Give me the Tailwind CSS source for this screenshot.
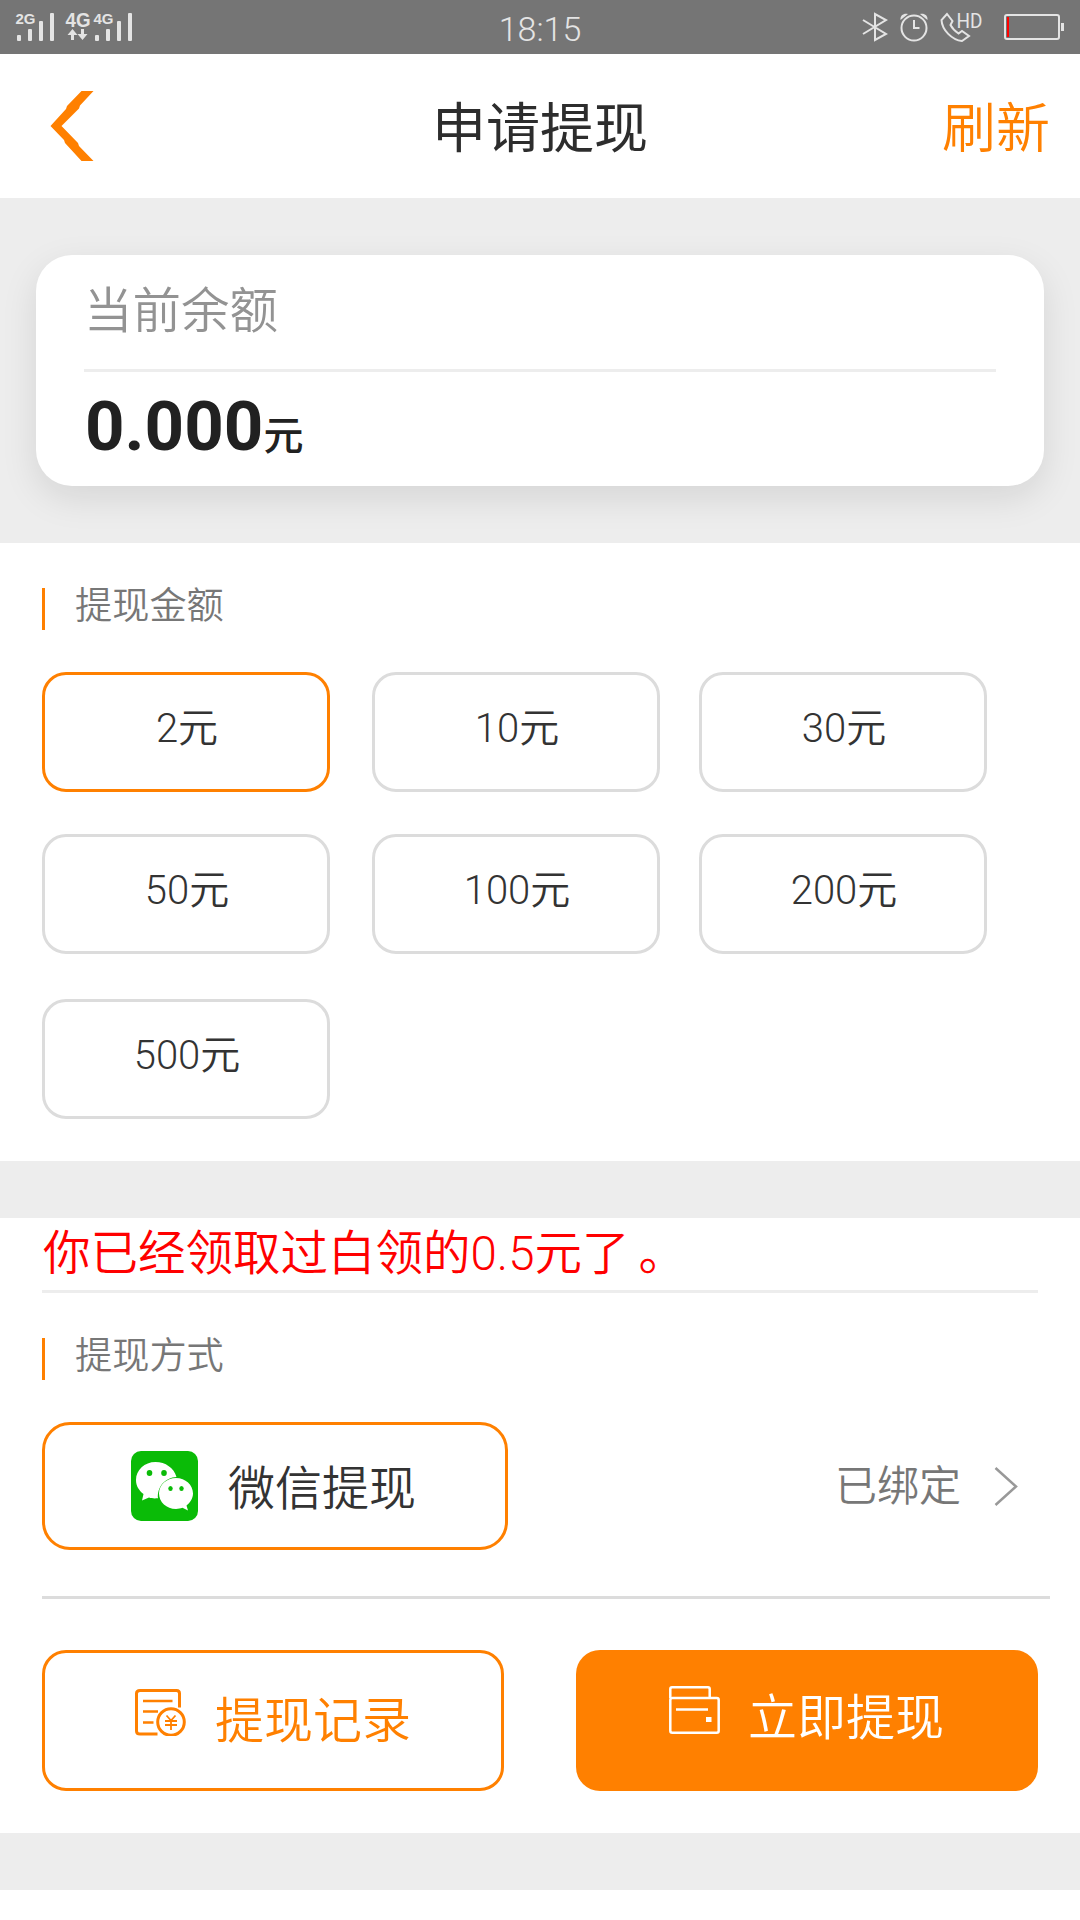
<!DOCTYPE html>
<html lang="zh-CN">
<head>
    <meta charset="UTF-8">
    <meta name="viewport" content="width=device-width, initial-scale=1.0">
    <script src="https://cdn.jsdelivr.net/npm/@tailwindcss/browser@4"></script>
    <title>申请提现</title>
</head>
<body class="bg-white">
    <div class="w-[1080px] h-[1920px] overflow-hidden bg-white font-['Roboto','Noto_Sans_CJK_SC',sans-serif] font-[350]">

        <!-- Status bar -->
        <div class="h-[54px] bg-[#757575] text-[#e4e4e4] flex items-center justify-between">
            <svg class="w-[150px] h-[54px]" viewBox="0 0 150 54" fill="#e4e4e4">
                <text x="15.500" y="24" font-family="Liberation Sans" font-weight="bold" font-size="15.500" textLength="20" lengthAdjust="spacingAndGlyphs">2G</text>
                <rect x="17" y="35" width="4" height="6" rx="1"/>
                <rect x="28" y="29" width="4" height="12" rx="1"/>
                <rect x="39" y="21" width="4" height="20" rx="1"/>
                <rect x="50" y="13" width="4" height="28" rx="1"/>
                <text x="65.500" y="27" font-family="Liberation Sans" font-weight="bold" font-size="19.500" textLength="25" lengthAdjust="spacingAndGlyphs">4G</text>
                <text x="93.500" y="24" font-family="Liberation Sans" font-weight="bold" font-size="15.500" textLength="20" lengthAdjust="spacingAndGlyphs">4G</text>
                <path d="M72.500 29 77.500 35H74V40H71V35H67.500Z M82.500 40 87.500 34H84V29H81V34H77.500Z"/>
                <rect x="95" y="35" width="4" height="6" rx="1"/>
                <rect x="106" y="29" width="4" height="12" rx="1"/>
                <rect x="117" y="21" width="4" height="20" rx="1"/>
                <rect x="128" y="13" width="4" height="28" rx="1"/>
            </svg>
            <span class="text-[34px] ml-[80px] mt-1">18:15</span>
            <svg class="w-[230px] h-[54px]" viewBox="0 0 230 54" fill="none" stroke="#e4e4e4" stroke-width="2">
                <path d="M13 20 36 34 25 40V14L36 20 13 34"/>
                <circle cx="64" cy="28" r="12.500"/>
                <path d="M64 20V28H69.500"/>
                <path d="M50.500 20C50 15 54 13 58 14Z M77.500 20C78 15 74 13 70 14Z" fill="#e4e4e4" stroke="none"/>
                <path d="M97 14 91.500 20C92 30 102 40 112 41L119 36 112 31 108.500 33.500C105 31 102 28 100.500 25L102.500 21Z"/>
                <text x="106.500" y="27.500" font-family="Roboto" font-weight="400" font-size="20" fill="#e4e4e4" stroke="none" textLength="26" lengthAdjust="spacingAndGlyphs">HD</text>
                <rect x="155" y="15" width="54" height="24" rx="2"/>
                <rect x="157" y="17" width="2" height="20" fill="#f00" stroke="none"/>
                <rect x="211" y="23" width="3" height="8" fill="#e4e4e4" stroke="none"/>
            </svg>
        </div>

        <!-- Header -->
        <header class="h-[144px] grid grid-cols-[1fr_auto_1fr] items-center px-[30px]">
            <svg class="w-[44px] h-[70px] ml-[20px]" viewBox="0 0 44 70" fill="#ff8000">
                <path d="M31.500 0H43.500L30 14.500 29 17.500 11.500 35 28 52 29 55 43.500 70H31.500L15 52 14 49 .5 35 16 18 17 15Z"/>
            </svg>
            <h1 class="text-[54px] leading-none text-[#2d2d2d] font-normal pt-[8px]">申请提现</h1>
            <a class="text-[54px] leading-none text-right text-[#ff8000] pt-[8px]">刷新</a>
        </header>

        <!-- Balance -->
        <section class="h-[345px] bg-[#ededed] px-[36px] pt-[57px]">
            <div class="h-[231px] rounded-[36px] bg-white px-[48px] shadow-[0_12px_36px_rgba(0,0,0,0.1)]">
                <div class="h-[117px] border-b-3 border-[#ededed] pt-[32px]">
                    <p class="text-[48.5px] leading-[50px] text-[#939393]">当前余额</p>
                </div>
                <p class="flex items-baseline pl-[1px] pt-[19px] text-[#212121]">
                    <span class="text-[69px] leading-[72px] font-bold">0.000</span>
                    <span class="text-[40px] leading-none font-medium">元</span>
                </p>
            </div>
        </section>

        <!-- Amounts -->
        <section class="h-[618px] pl-[42px] pt-[45px]">
            <h2 class="h-[42px] border-l-3 border-[#ff8000] pl-[30px] text-[37.2px] leading-[36px] text-[#777]">提现金额</h2>
            <div id="amounts" class="mt-[42px] grid grid-cols-[330px_327px_288px] grid-rows-[162px_165px_120px]"></div>
        </section>

        <div class="h-[57px] bg-[#ededed]"></div>

        <!-- Method -->
        <section class="h-[615px] pl-[42px]">
            <p class="w-[996px] h-[75px] border-b-3 border-[#ededed] text-[47.5px] leading-[73px] text-[#f00] pl-px">你已经领取过白领的0.5元了<span class="ml-[9px]">。</span></p>
            <h2 class="mt-[45px] h-[42px] border-l-3 border-[#ff8000] pl-[30px] text-[37.2px] leading-[36px] text-[#777]">提现方式</h2>

            <div class="mt-[42px] w-[1008px] h-[177px] border-b-3 border-[#dcdcdc] flex justify-between">
                <button class="w-[466px] h-[128px] rounded-[28px] border-3 border-[#ff8000] flex items-center pl-[86px]">
                    <svg class="w-[67px] h-[70px]" viewBox="0 0 67 70">
                        <rect width="67" height="70" rx="10" fill="#0abb07"/>
                        <path d="M24.500 11C13.500 11 5 19 5 29C5 35 8 39.500 12.500 43L11 49.500 18 46.500C21 47.500 23 47.500 27 47.300C26 36 34 26.500 45.500 26C43 17 34.500 11 24.500 11Z" fill="#fff"/>
                        <path d="M45 27C35.500 27 28 34 28 42.500C28 51 35.500 58 45 58C47.500 58 49.500 57.500 51.500 56.800L57 59.500 55.500 54.500C59.500 51.500 62 47 62 42.500C62 34 54.500 27 45 27Z" fill="#fff"/>
                        <g fill="#0abb07">
                            <ellipse cx="18.500" cy="22" rx="2.800" ry="3"/>
                            <ellipse cx="33" cy="22" rx="2.800" ry="3"/>
                            <ellipse cx="39.500" cy="37.500" rx="2.200" ry="2.500"/>
                            <ellipse cx="50.500" cy="37.500" rx="2.200" ry="2.500"/>
                        </g>
                    </svg>
                    <span class="ml-[30px] text-[47px] leading-none text-[#333] mt-[5px]">微信提现</span>
                </button>
                <div class="h-[127px] flex items-center text-[#777] pr-[32px]">
                    <span class="text-[42px] leading-none mr-[33px] mt-[2px]">已绑定</span>
                    <svg class="w-[24px] h-[40px]" viewBox="0 0 24 40" fill="none" stroke="#999" stroke-width="2.500">
                        <path d="M1.500 2 22 20.500 1.500 39"/>
                    </svg>
                </div>
            </div>

            <div class="mt-[51px] flex gap-[72px]">
                <button class="w-[462px] h-[141px] rounded-[24px] border-3 border-[#ff8000] text-[#ff8000] flex items-start pl-[90px] pt-[36px]">
                    <svg class="w-[51px] h-[47px]" viewBox="0 0 51 47" fill="none" stroke="#ff8000" stroke-width="3">
                        <path d="M22.500 45H5Q1.500 45 1.500 42V4.500Q1.500 1.500 5 1.500H41.500Q44.500 1.500 44.500 4.500V18.500"/>
                        <path d="M8 12H37.500M8 22.500H23M8 33.500H18.500" stroke-width="2.500"/>
                        <circle cx="36" cy="33" r="13.300"/>
                        <path d="M31.500 26.500 36 31.500 40.500 26.500M36 31.500V41M30 32H42M30 36H42" stroke-width="1.800"/>
                    </svg>
                    <span class="ml-[29px] mt-[8px] text-[49px] leading-none">提现记录</span>
                </button>
                <button class="w-[462px] h-[141px] rounded-[24px] bg-[#ff8000] text-white flex items-start pl-[93px] pt-[36px]">
                    <svg class="w-[51px] h-[48px]" viewBox="0 0 51 48" fill="none" stroke="#fff" stroke-width="2.500">
                        <path d="M1.300 12V3Q1.300 1.300 3 1.300H39Q40.700 1.300 40.700 3V12"/>
                        <rect x="1.300" y="12" width="48.400" height="34.700" rx="2"/>
                        <path d="M7 23.500H39"/>
                        <rect x="37" y="31" width="5.500" height="5" fill="#fff" stroke="none"/>
                    </svg>
                    <span class="ml-[28px] mt-[8px] text-[49px] leading-none">立即提现</span>
                </button>
            </div>
        </section>

        <div class="h-[57px] bg-[#ededed]"></div>
    </div>

    <script>
        const amounts = [2, 10, 30, 50, 100, 200, 500];
        const container = document.getElementById('amounts');

        amounts.forEach((amount, index) => {
            const button = document.createElement('button');
            button.className = 'w-[288px] h-[120px] rounded-[24px] border-3 text-[40px] leading-none text-[#333] pb-[6px] pl-[2px]';
            // first amount is selected by default
            button.classList.add(index === 0 ? 'border-[#ff8000]' : 'border-[#dcdcdc]');
            button.innerText = `${amount}元`;
            container.appendChild(button);
        });
    </script>
</body>
</html>
